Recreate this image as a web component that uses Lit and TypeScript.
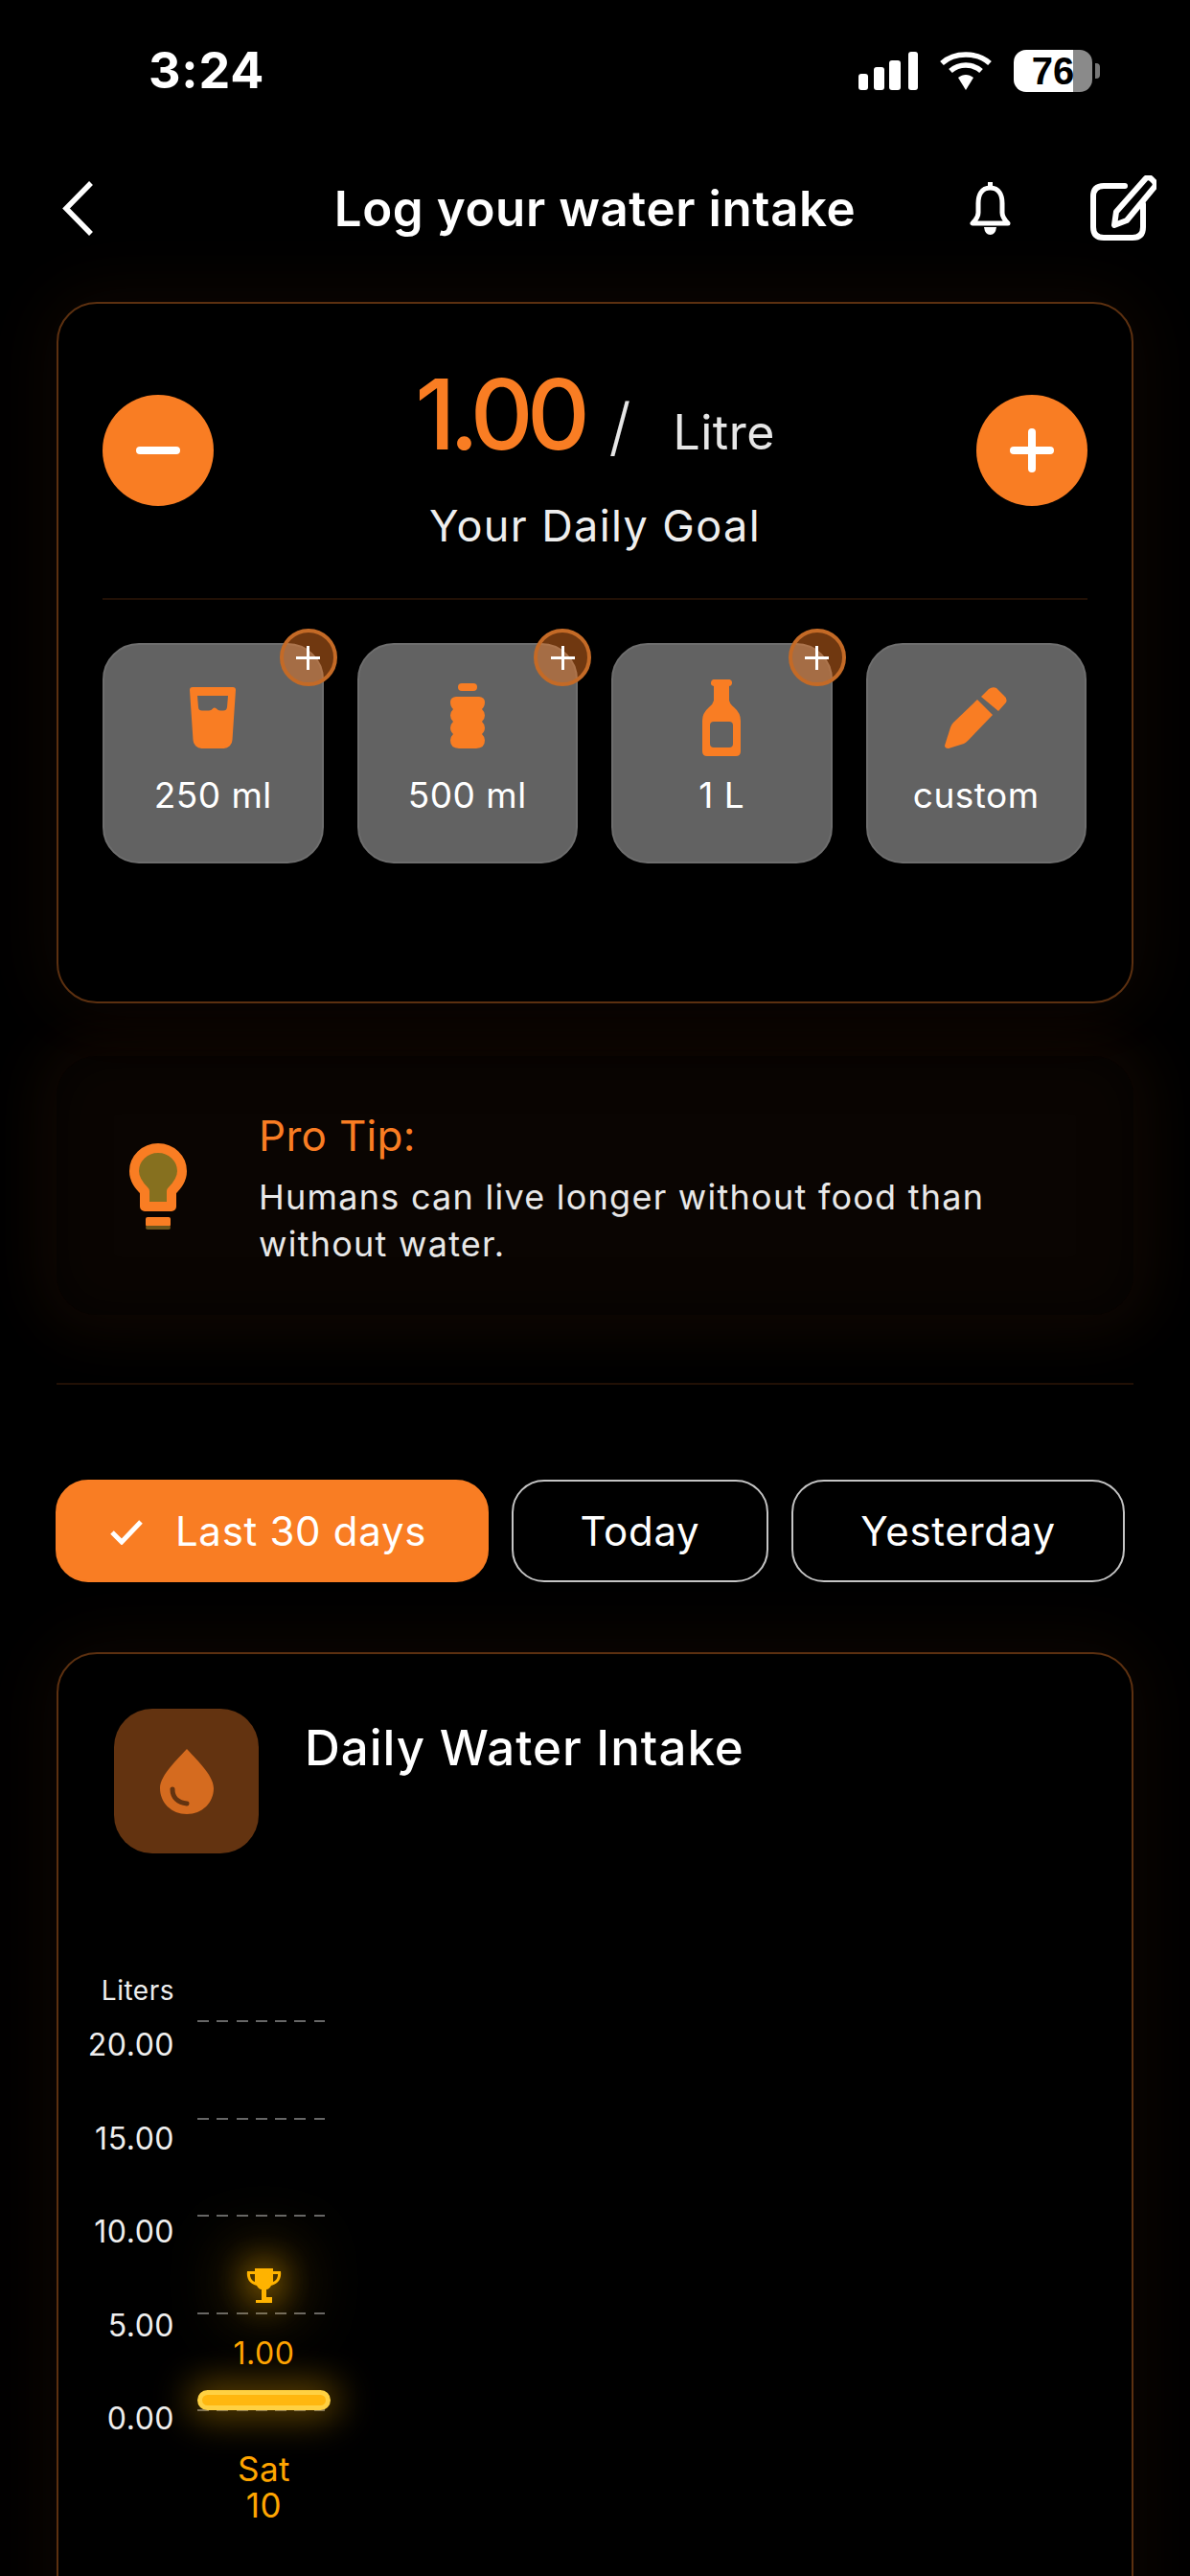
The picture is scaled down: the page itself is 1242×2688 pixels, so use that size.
import { LitElement, html, css } from "lit";
import { customElement } from "lit/decorators.js";

const tiles = [
  { label: "250 ml", plus: true, icon: html`<svg width="48" height="64" viewBox="0 0 48 64"><path fill="#f97d23" fill-rule="evenodd" d="M3 0h42a3 3 0 0 1 3 3l-3.500 52a9 9 0 0 1-9 9h-23a9 9 0 0 1-9-9L0 3a3 3 0 0 1 3-3zM8 9l1 12q.2 3.500 4 3.500h7q2.500 0 4-2t4 0q1.500 2 4 2h3q3.500 0 4-3.500l1-12z"/></svg>` },
  { label: "500 ml", plus: true, icon: html`<svg width="36" height="72" viewBox="0 0 36 72"><g fill="#f97d23"><rect x="8" y="0" width="20" height="8" rx="4"/><path d="M6 14h24a6 6 0 0 1 6 6q0 5-3 8 3 3 3 7t-3 7q3 3 3 7t-3 7q3 3 3 7 0 9-9 9H9q-9 0-9-9 0-4 3-7-3-3-3-7t3-7q-3-3-3-7t3-7q-3-3-3-8a6 6 0 0 1 6-6z" transform="scale(1 .93) translate(0 1)"/></g></svg>` },
  { label: "1 L", plus: true, icon: html`<svg width="40" height="80" viewBox="0 0 40 80"><path fill="#f97d23" fill-rule="evenodd" d="M13 0h14a3.500 3.500 0 0 1 1 7v15q1 4 5 7 7 6 7 14v32q0 5-5 5H5q-5 0-5-5V43q0-8 7-14 4-3 5-7V7a3.500 3.500 0 0 1 1-7zM12 44q-4 0-4 4v19q0 4 4 4h16q4 0 4-4V48q0-4-4-4z"/></svg>` },
  { label: "custom", plus: false, icon: html`<svg width="65" height="64" viewBox="0 0 65 64"><g fill="#f97d23"><path d="M38 10l8-8q4-3 8-1l7 7q5 4 3 8l-8 9z"/><path d="M34 13l16 16-26 27q-2 2-4 3L4 64q-4 0-4-3l6-19q1-3 3-5z"/></g></svg>` },
];

const axis = ["20.00", "15.00", "10.00", "5.00", "0.00"];

@customElement("app-root")
export class AppRoot extends LitElement {
  static styles = css`
    :host {
      display: block;
      width: 1242px;
      height: 2688px;
      overflow: hidden;
      background: #000;
      color: #fff;
      font-family: "Inter", "Liberation Sans", sans-serif;
    }
    svg { display: block; flex: none; }
    .status {
      height: 148px;
      display: flex;
      align-items: center;
      justify-content: space-between;
      padding: 0 102px 0 155px;
      box-sizing: border-box;
    }
    .time { font-size: 52px; font-weight: 700; line-height: 1; letter-spacing: 0.8px; }
    .status-icons { display: flex; align-items: center; gap: 22px; }
    .batt {
      width: 82px; height: 44px; border-radius: 13px; position: relative;
      background: linear-gradient(90deg, #fff 0 62px, #8a8a8a 62px);
      color: #000; font: 700 40px/45px "Liberation Sans", sans-serif; text-align: center;
    }
    .batt::after {
      content: ""; position: absolute; left: 85px; top: 14px; width: 5px; height: 16px;
      border-radius: 0 4px 4px 0; background: #777;
    }
    .nav {
      height: 138px;
      display: grid;
      grid-template-columns: minmax(0, 1fr) auto minmax(0, 1fr);
      align-items: center;
      padding: 0 35px;
      margin-bottom: 29px;
      box-sizing: border-box;
    }
    .back { margin-left: 30px; }
    .nav-title { font-size: 51px; font-weight: 600; letter-spacing: 0.6px; white-space: nowrap; line-height: 1; }
    .nav-right { display: flex; justify-content: flex-end; align-items: center; gap: 83px; }
    .card {
      margin: 0 59px;
      border: 2px solid #5c3010;
      border-radius: 42px;
      background: #000;
      box-sizing: border-box;
      box-shadow: 0 0 70px 14px rgba(249, 125, 35, 0.05);
    }
    .goal { height: 732px; padding: 95px 46px 0; position: relative; }
    .goal-top { display: flex; justify-content: space-between; align-items: flex-start; height: 212px; border-bottom: 2px solid #211005; }
    .round {
      width: 116px; height: 116px; border-radius: 50%; background: #f97d23;
      display: flex; align-items: center; justify-content: center;
    }
    .goal-mid { display: flex; flex-direction: column; align-items: center; margin-top: -30px; }
    .value { display: flex; align-items: baseline; color: #e6e6e6; }
    .big { font-size: 102px; font-weight: 500; color: #f97d23; letter-spacing: -6.500px; line-height: 100px; }
    .slash { font-size: 66px; font-weight: 300; margin-left: 26px; line-height: 100px; }
    .litre { font-size: 50px; margin-left: 44px; line-height: 100px; letter-spacing: 0.5px; }
    .goal-sub { font-size: 45px; color: #eee; line-height: 54px; margin-top: 21px; letter-spacing: 1.4px; }
    .tiles { display: flex; gap: 35px; margin-top: 45px; }
    .tile {
      position: relative;
      width: 230.500px; height: 230px;
      box-sizing: border-box;
      background: #626262;
      border: 2px solid #6e6e6e;
      border-radius: 38px;
      display: flex; flex-direction: column; align-items: center;
      font: 400 37px/44px "Inter", sans-serif;
    }
    .tile-icon { height: 80px; margin-top: 36px; display: flex; align-items: center; justify-content: center; }
    .tile-label { margin-top: 19px; letter-spacing: 0.5px; }
    .badge {
      position: absolute; right: -16px; top: -17px;
      width: 60px; height: 60px; box-sizing: border-box; border-radius: 50%;
      background: rgba(249, 125, 35, 0.45);
      border: 4px solid #c46a26;
      display: flex; align-items: center; justify-content: center;
    }
    .tip {
      margin: 55px 59px 0;
      height: 270px;
      border-radius: 42px;
      background: #0a0502;
      box-shadow: inset 0 0 50px rgba(0, 0, 0, 0.65), 0 0 60px 22px rgba(249, 125, 35, 0.06);
      display: flex; align-items: center;
      padding: 0 0 0 75px;
      box-sizing: border-box;
    }
    .tip-text { margin-left: 74px; }
    .tip-title { font-size: 44px; line-height: 56px; color: #f97d23; letter-spacing: 0.3px; }
    .tip-body { font-size: 36px; line-height: 49.500px; color: #e8e8e8; margin-top: 12px; margin-bottom: -6px; width: 800px; letter-spacing: 1.25px; }
    .rule { margin: 71px 59px 0; height: 2px; background: #211005; }
    .chips { display: flex; margin: 99px 0 0 58px; font-size: 42px; }
    .chip {
      height: 107px; box-sizing: border-box; border: 2px solid #c4c4c4; border-radius: 34px;
      display: flex; align-items: center; justify-content: center; letter-spacing: 0.7px;
    }
    .chip.on { background: #f97d23; border-color: #f97d23; width: 452px; gap: 33px; margin-right: 24px; padding-right: 9px; }
    .chip.today { width: 268px; margin-right: 24px; }
    .chip.yest { width: 348px; }
    .chart { margin-top: 73px; height: 1100px; padding: 57px 58px 0; }
    .chart-head { display: flex; gap: 48px; }
    .drop-box {
      width: 151px; height: 151px; border-radius: 40px; background: #633310;
      display: flex; align-items: center; justify-content: center;
    }
    .chart-title { font-size: 51px; font-weight: 500; letter-spacing: 1px; line-height: 60px; margin-top: 11px; }
    .chart-body { display: flex; margin: 125px 0 0 -58px; }
    .axis { width: 121px; text-align: right; font-size: 32px; color: #eee; margin-right: 24px; letter-spacing: 0.5px; }
    .axis-head { font-size: 28px; line-height: 36px; margin-bottom: 17px; }
    .axis-row { height: 97.500px; line-height: 44px; }
    .plot-col { width: 139px; margin-top: 49px; }
    .plot { position: relative; height: 408px; display: flex; flex-direction: column; justify-content: space-between; }
    .grid { height: 2px; width: 133px; background: repeating-linear-gradient(90deg, #666 0 12px, transparent 12px 20.300px); }
    .stack {
      position: absolute; left: 0; right: 0; bottom: 1px;
      display: flex; flex-direction: column; align-items: center; color: #ffa500;
    }
    .trophy { filter: drop-shadow(0 0 18px #ffb300) drop-shadow(0 0 34px rgba(255,179,0,.8)); }
    .stack-val { font-size: 32px; line-height: 40px; margin-top: 33px; letter-spacing: 0.5px; }
    .bar {
      width: 139px; height: 21px; box-sizing: border-box; border-radius: 11px; margin-top: 18px;
      background: #ffb70f; border: 5px solid #ffd142;
      box-shadow: 0 0 36px 10px rgba(255, 179, 0, 0.35);
    }
    .day { text-align: center; color: #ffa500; font-size: 35px; line-height: 38px; margin-top: 41px; letter-spacing: 0.5px; }
  `;

  render() {
    return html`
      <div class="status">
        <div class="time">3:24</div>
        <div class="status-icons">
          <svg width="62" height="40" viewBox="0 0 62 40"><g fill="#fff"><rect x="0" y="23" width="10" height="17" rx="3"/><rect x="16" y="16" width="11" height="24" rx="3"/><rect x="32" y="9" width="12" height="31" rx="3"/><rect x="52" y="0" width="10" height="40" rx="3"/></g></svg>
          <svg width="56" height="40" viewBox="0 0 56 40"><g fill="none" stroke="#fff" stroke-width="5.500"><path d="M3 12C16 0 40 0 53 12"/><path d="M12 20c9-8 23-8 32 0"/></g><path fill="#fff" d="M20 27c5-4 11-4 16 0l-8 13z"/></svg>
          <div class="batt">76</div>
        </div>
      </div>

      <div class="nav">
        <svg class="back" width="32" height="57" viewBox="0 0 32 57"><path d="M30 2L4 28.500 30 55" fill="none" stroke="#fff" stroke-width="5.500"/></svg>
        <div class="nav-title">Log your water intake</div>
        <div class="nav-right">
          <svg width="43" height="55" viewBox="0 0 43 55"><g fill="none" stroke="#fff" stroke-width="5" stroke-linejoin="round"><path d="M21.500 6C12 6 9 14 9 22v10q0 5-6 11h37q-6-6-6-11V22c0-8-3-16-12.500-16z"/></g><path fill="#fff" d="M19 0h5v7h-5zM15 47h13q-1 8-6.500 8T15 47z"/></svg>
          <svg width="69" height="68" viewBox="0 0 69 68"><path d="M36 11H14Q3 11 3 22v32q0 11 11 11h30q11 0 11-11V30" fill="none" stroke="#fff" stroke-width="6" stroke-linecap="round"/><path d="M58 3q3-2 6 1l2 2q3 3 1 6L38 47l-13 5 2-14z" fill="none" stroke="#fff" stroke-width="6" stroke-linejoin="round"/></svg>
        </div>
      </div>

      <section class="card goal">
        <div class="goal-top">
          <div class="round"><svg width="46" height="8" viewBox="0 0 46 8"><rect width="46" height="8" rx="4" fill="#fff"/></svg></div>
          <div class="goal-mid">
            <div class="value"><span class="big">1.00</span><span class="slash">/</span><span class="litre">Litre</span></div>
            <div class="goal-sub">Your Daily Goal</div>
          </div>
          <div class="round"><svg width="46" height="46" viewBox="0 0 46 46"><rect y="19" width="46" height="8" rx="4" fill="#fff"/><rect x="19" width="8" height="46" rx="4" fill="#fff"/></svg></div>
        </div>
        <div class="tiles">
          ${tiles.map(
            (t) => html`<div class="tile">
              <div class="tile-icon">${t.icon}</div>
              <div class="tile-label">${t.label}</div>
              ${t.plus
                ? html`<div class="badge"><svg width="25" height="25" viewBox="0 0 25 25"><path d="M12.500 0v25M0 12.500h25" stroke="#fff" stroke-width="3"/></svg></div>`
                : ""}
            </div>`
          )}
        </div>
      </section>

      <section class="tip">
        <svg width="62" height="91" viewBox="0 0 62 91">
          <g fill="#86701f" stroke="#f97d23" stroke-width="10">
            <path d="M31 7C17 7 6 18 6 31c0 9 5 15 11 21v16h28V52c6-6 11-12 11-21C56 18 45 7 31 7z" transform="translate(0 -1)" stroke-linejoin="round"/>
          </g>
          <rect x="18" y="78" width="26" height="10" rx="2" fill="#f97d23"/>
          <rect x="18" y="87" width="26" height="4" rx="2" fill="#6b551c"/>
        </svg>
        <div class="tip-text">
          <div class="tip-title">Pro Tip:</div>
          <div class="tip-body">Humans can live longer without food than without water.</div>
        </div>
      </section>

      <div class="rule"></div>

      <div class="chips">
        <div class="chip on">
          <svg width="36" height="28" viewBox="0 0 36 28"><path d="M3 15l10 10L33 4" fill="none" stroke="#fff" stroke-width="5"/></svg>
          <span>Last 30 days</span>
        </div>
        <div class="chip today">Today</div>
        <div class="chip yest">Yesterday</div>
      </div>

      <section class="card chart">
        <div class="chart-head">
          <div class="drop-box">
            <svg width="56" height="68" viewBox="0 0 56 68"><path fill="#d56b1f" d="M28 0c8 9 28 27 28 41 0 15-12 27-28 27S0 56 0 41C0 27 20 9 28 0z"/><path d="M13 42c0 9 6 14 15 15" fill="none" stroke="#633310" stroke-width="5" stroke-linecap="round"/></svg>
          </div>
          <div class="chart-title">Daily Water Intake</div>
        </div>
        <div class="chart-body">
          <div class="axis">
            <div class="axis-head">Liters</div>
            ${axis.map((a) => html`<div class="axis-row">${a}</div>`)}
          </div>
          <div class="plot-col">
            <div class="plot">
              ${axis.map(() => html`<div class="grid"></div>`)}
              <div class="stack">
                <svg class="trophy" width="37" height="36" viewBox="0 0 37 36"><path fill="#ffb300" d="M9 0h19v3h8c1 7-2 13-10 15-1 2-3 4-5 4v8h6v6H10v-3h6v-11c-2 0-4-2-5-4C3 16 0 10 1 3h8zM4 6c0 4 2 7 5 8V6zM33 6h-5v8c3-1 5-4 5-8z"/></svg>
                <div class="stack-val">1.00</div>
                <div class="bar"></div>
              </div>
            </div>
            <div class="day">Sat<br />10</div>
          </div>
        </div>
      </section>
    `;
  }
}
